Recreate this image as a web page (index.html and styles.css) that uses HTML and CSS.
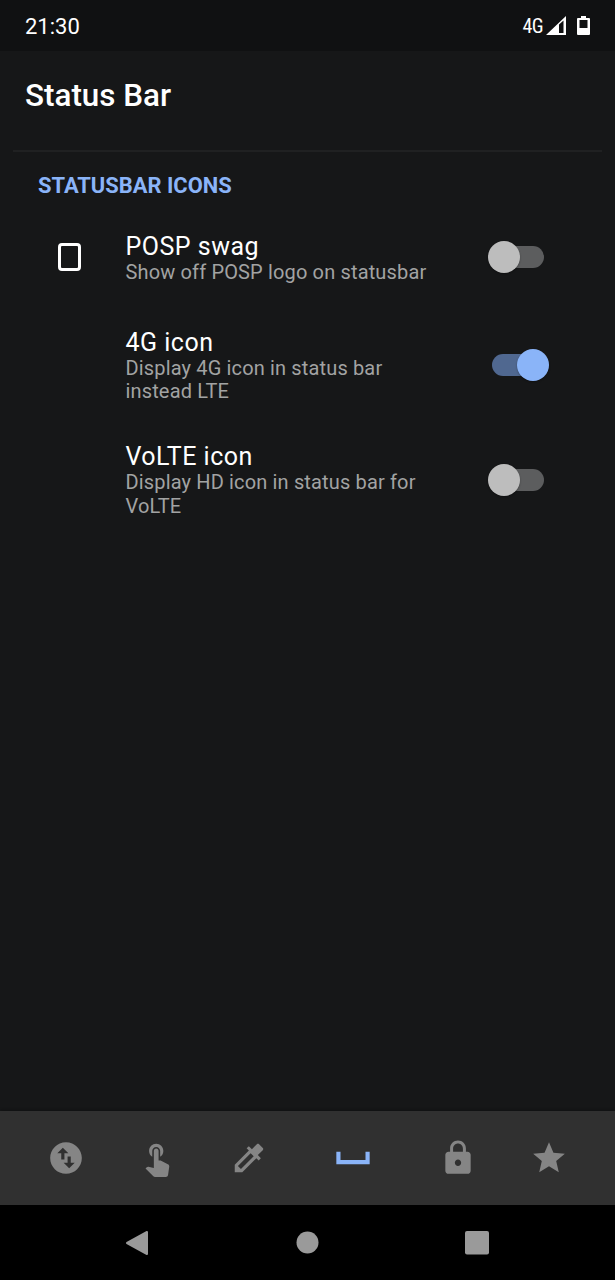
FILE: index.html
```html
<!DOCTYPE html>
<html lang="en">
<head>
    <meta charset="utf-8">
    <title>Status Bar</title>
    <link rel="stylesheet" href="styles.css">
</head>
<body>
    <header class="system-bar">
        <span class="clock">21:30</span>
        <div class="system-icons">
            <span class="network">4G</span>
            <svg class="signal" width="20" height="20" viewBox="0 0 20 20"><path fill-rule="evenodd" d="M20 0v19H0zM13 8.500V17h4.500V4.500z"/></svg>
            <svg class="battery" width="13" height="20" viewBox="0 0 13 20"><path fill-rule="evenodd" d="M4 0h5v2h3a1 1 0 0 1 1 1v15a1 1 0 0 1-1 1H1a1 1 0 0 1-1-1V3a1 1 0 0 1 1-1h3zM2.500 4v8h8V4z"/></svg>
        </div>
    </header>

    <main class="content">
        <h1>Status Bar</h1>
        <section class="settings">
            <h2>STATUSBAR ICONS</h2>
            <div class="setting">
                <div class="setting-icon"><div class="phone"></div></div>
                <div class="setting-text">
                    <h3>POSP swag</h3>
                    <p>Show off POSP logo on statusbar</p>
                </div>
                <div class="switch"></div>
            </div>
            <div class="setting">
                <div class="setting-icon"></div>
                <div class="setting-text">
                    <h3>4G icon</h3>
                    <p>Display 4G icon in status bar instead LTE</p>
                </div>
                <div class="switch on"></div>
            </div>
            <div class="setting">
                <div class="setting-icon"></div>
                <div class="setting-text">
                    <h3>VoLTE icon</h3>
                    <p>Display HD icon in status bar for VoLTE</p>
                </div>
                <div class="switch"></div>
            </div>
        </section>
    </main>

    <nav class="tabs">
        <div class="tab">
            <svg viewBox="0 0 24 24"><path d="M12 2C6.480 2 2 6.480 2 12s4.480 10 10 10 10-4.480 10-10S17.520 2 12 2zM6.500 9L10 5.500 13.500 9H11v4H9V9H6.500zm11 6L14 18.500 10.500 15H13v-4h2v4h2.500z"/></svg>
        </div>
        <div class="tab">
            <svg viewBox="0 0 24 24"><path d="M9 11.240V7.500C9 6.120 10.120 5 11.500 5S14 6.120 14 7.500v3.740c1.210-.81 2-2.180 2-3.740C16 5.010 13.990 3 11.500 3S7 5.010 7 7.500c0 1.560.79 2.930 2 3.740zm9.840 4.630l-4.540-2.260c-.17-.07-.35-.11-.54-.11H13v-6c0-.83-.67-1.500-1.500-1.500S10 6.670 10 7.500v10.740l-3.430-.72c-.08-.01-.15-.03-.24-.03-.31 0-.59.13-.79.33l-.79.8 4.940 4.940c.27.27.65.44 1.060.44h6.790c.75 0 1.330-.55 1.440-1.280l.75-5.270c.01-.07.02-.14.02-.2 0-.62-.38-1.160-.91-1.380z"/></svg>
        </div>
        <div class="tab">
            <svg viewBox="0 0 24 24"><path d="M20.710 5.630l-2.340-2.340c-.39-.39-1.020-.39-1.410 0l-3.120 3.120-1.930-1.910-1.410 1.410 1.420 1.420L3 16.250V21h4.750l8.920-8.920 1.420 1.420 1.410-1.410-1.920-1.920 3.120-3.120c.4-.4.4-1.030.01-1.420zM6.920 19L5 17.080l8.060-8.060 1.920 1.920L6.920 19z"/></svg>
        </div>
        <div class="tab active">
            <svg viewBox="0 0 24 24"><path d="M18 9v4H6V9H4v6h16V9z"/></svg>
        </div>
        <div class="tab">
            <svg viewBox="0 0 24 24"><path d="M18 8h-1V6c0-2.760-2.240-5-5-5S7 3.240 7 6v2H6c-1.100 0-2 .9-2 2v10c0 1.100.9 2 2 2h12c1.100 0 2-.9 2-2V10c0-1.100-.9-2-2-2zm-6 9c-1.100 0-2-.9-2-2s.9-2 2-2 2 .9 2 2-.9 2-2 2zm3.100-9H8.900V6c0-1.710 1.390-3.100 3.100-3.100 1.710 0 3.100 1.390 3.100 3.100v2z"/></svg>
        </div>
        <div class="tab">
            <svg viewBox="0 0 24 24"><path d="M12 17.270L18.180 21l-1.640-7.030L22 9.240l-7.190-.61L12 2 9.190 8.630 2 9.240l5.460 4.730L5.820 21z"/></svg>
        </div>
    </nav>

    <footer class="navigation">
        <svg width="24" height="26" viewBox="0 0 24 26"><path d="M2 13L22 2v22z" stroke="#9a9a9a" stroke-width="2" stroke-linejoin="round"/></svg>
        <svg width="24" height="24" viewBox="0 0 24 24"><circle cx="12.500" cy="11.500" r="11"/></svg>
        <svg width="24" height="24" viewBox="0 0 24 24"><rect width="24" height="23.500" rx="2"/></svg>
    </footer>
</body>
</html>
```
FILE: styles.css
```css
* {
    box-sizing: border-box;
}
body {
    display: flex;
    flex-direction: column;
    height: 1280px;
    margin: 0;
    background: #161718;
    color: #fff;
    font-family: Roboto, sans-serif;
}
h1, h2, h3, p {
    margin: 0;
}
svg {
    display: block;
}
.system-bar {
    display: flex;
    justify-content: space-between;
    align-items: center;
    height: 51px;
    padding: 0 25px;
    background: #101112;
}
.clock {
    font-size: 22px;
    padding-top: 2px;
}
.system-icons {
    display: flex;
    align-items: center;
    fill: #fff;
}
.network {
    font-family: "Roboto Condensed", Roboto, sans-serif;
    font-size: 20px;
    letter-spacing: -0.6px;
    margin-right: 3px;
}
.battery {
    margin-left: 11px;
}
.content {
    flex: 1;
    padding: 0 13px;
}
h1 {
    height: 99px;
    padding-left: 12px;
    font-size: 31.400px;
    font-weight: 500;
    line-height: 90px;
}
.settings {
    border-top: 2px solid #202122;
    padding: 21px 25px 0;
}
h2 {
    margin-bottom: 8.500px;
    color: #8ab4f8;
    font-size: 21.900px;
    font-weight: 700;
    line-height: 26px;
}
.setting {
    display: flex;
    align-items: center;
    min-height: 100px;
    padding: 19px 0 19.500px;
}
.setting-icon {
    width: 87.500px;
    padding-left: 19.500px;
}
.phone {
    width: 23px;
    height: 28px;
    border: 3.500px solid #fff;
    border-radius: 4px;
}
.setting-text {
    width: 310px;
    padding-top: 2px;
    margin-bottom: -1px;
}
h3 {
    font-size: 25px;
    font-weight: 400;
    line-height: 28px;
    letter-spacing: 0.5px;
}
p {
    color: #a2a3a3;
    font-size: 20px;
    line-height: 23.700px;
    letter-spacing: 0.15px;
}
.switch {
    position: relative;
    width: 52px;
    height: 22px;
    margin-left: 56.500px;
    border-radius: 11px;
    background: #5c5d5e;
}
.switch::after {
    content: "";
    position: absolute;
    top: -5px;
    left: -4px;
    width: 32px;
    height: 32px;
    border-radius: 50%;
    background: #bdbdbd;
    box-shadow: 0 1px 2px rgba(0, 0, 0, 0.3);
}
.switch.on {
    background: #506890;
}
.switch.on::after {
    left: 25px;
    background: #8ab4f8;
}
.tabs {
    display: flex;
    align-items: center;
    height: 94px;
    padding: 0 20px;
    background: #303030;
    fill: #858585;
    box-shadow: 0 -1px 3px rgba(0, 0, 0, 0.3);
}
.tab {
    display: flex;
    justify-content: center;
    flex: 0 0 91.600px;
}
.tab svg {
    width: 38px;
    height: 38px;
}
.tab.active {
    flex-basis: 117px;
    fill: #8ab4f8;
}
.tab.active svg {
    width: 50px;
    height: 50px;
}
.navigation {
    display: flex;
    justify-content: space-between;
    align-items: center;
    height: 75px;
    padding: 0 126px 0 125px;
    background: #000;
    fill: #9a9a9a;
}
```
